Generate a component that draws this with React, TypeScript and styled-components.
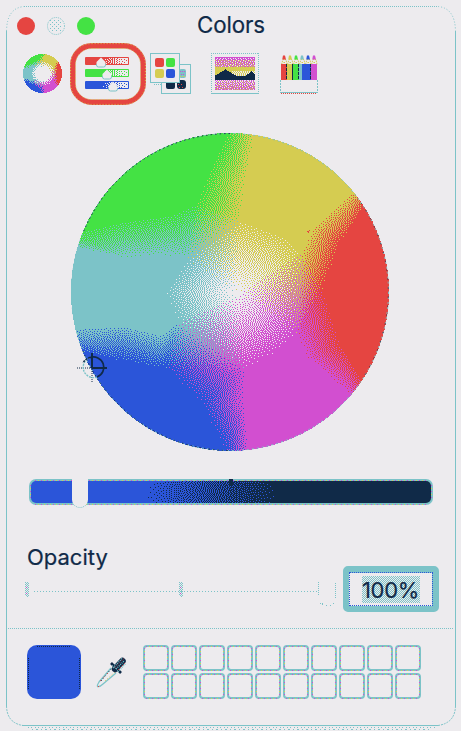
import React, { useMemo } from 'react';
import styled, { createGlobalStyle } from 'styled-components';

const c = {
  paper: '#edebee',
  teal: '#7cc3c8',
  red: '#e54541',
  green: '#44e244',
  yellow: '#d5cc51',
  blue: '#2b55d9',
  magenta: '#d24fd0',
  navy: '#102a48',
};

type Ink = keyof typeof c;
type Blend = Partial<Record<Ink, number>>;
type Sample = (x: number, y: number) => Blend | null;

const inks = Object.keys(c) as Ink[];
const clamp = (v: number, lo = 0, hi = 1) => Math.max(lo, Math.min(hi, v));

/* Serpentine error diffusion of ink shares; each ink becomes one path of pixel runs. */
function diffuse(w: number, h: number, sample: Sample) {
  const n = inks.length;
  const paths = inks.map(() => '');
  const v = new Float32Array(n);
  let cur = new Float32Array((w + 2) * n);
  for (let y = 0; y < h; y++) {
    const next = new Float32Array((w + 2) * n);
    const row = new Int8Array(w).fill(-1);
    const dir = y % 2 ? -1 : 1;
    for (let k = 0, x = dir > 0 ? 0 : w - 1; k < w; k++, x += dir) {
      const blend = sample(x, y);
      if (!blend) continue;
      const o = (x + 1) * n;
      let best = -1;
      for (let i = 0; i < n; i++) {
        const share = blend[inks[i]] || 0;
        v[i] = share + cur[o + i];
        if (share > 0.01 && (best < 0 || v[i] > v[best])) best = i;
      }
      row[x] = best;
      for (let i = 0; i < n; i++) {
        const e = clamp(v[i] - (i === best ? 1 : 0), -1, 1);
        cur[o + dir * n + i] += (e * 7) / 16;
        next[o - dir * n + i] += (e * 3) / 16;
        next[o + i] += (e * 5) / 16;
        next[o + dir * n + i] += e / 16;
      }
    }
    for (let x = 0; x < w; ) {
      let end = x + 1;
      while (end < w && row[end] === row[x]) end++;
      if (row[x] >= 0) paths[row[x]] += `M${x} ${y}h${end - x}v1h${x - end}z`;
      x = end;
    }
    cur = next;
  }
  return paths;
}

type Vertex = [number, number, Ink];
const W: Vertex = [15, 0, 'paper'];
const Y = ([[35, 218], [170, 172], [212, 128]] as const).map(([x, y]): Vertex => [x, y, 'yellow']);
const T = ([[-130, 95], [-195, 0], [-155, -85]] as const).map(([x, y]): Vertex => [x, y, 'teal']);
const M = ([[50, -228], [160, -170], [195, -130]] as const).map(([x, y]): Vertex => [x, y, 'magenta']);
const G: Vertex = [-105, 268, 'green'];
const B: Vertex = [-195, -228, 'blue'];
const R: Vertex = [278, 12, 'red'];

/* A soft border between two hues, as pairs of points running outwards. */
const band = (a: Ink, b: Ink, rows: number[][]) =>
  rows.slice(1).flatMap((q, i) => {
    const p = rows[i];
    const a0: Vertex = [p[0], p[1], a];
    const b0: Vertex = [p[2], p[3], b];
    const a1: Vertex = [q[0], q[1], a];
    const b1: Vertex = [q[2], q[3], b];
    return [[a0, b0, a1], [b0, a1, b1]];
  });

const mesh: Vertex[][] = [
  [W, Y[0], Y[1]], [W, Y[1], Y[2]], [W, Y[2], M[2]], [W, M[2], M[1]], [W, M[1], M[0]],
  [W, M[0], T[2]], [W, T[2], T[1]], [W, T[1], T[0]], [W, T[0], Y[0]],
  [Y[2], M[2], R], [Y[0], T[0], G], [T[2], M[0], B],
  ...band('green', 'yellow', [[-105, 268, 35, 218], [-80, 330, 48, 330], [-10, 485, 80, 485]]),
  ...band('green', 'teal', [[-105, 268, -130, 95], [-180, 236, -180, 105], [-310, 220, -310, 100], [-490, 180, -490, 135]]),
  ...band('teal', 'blue', [[-155, -85, -195, -228], [-200, -122, -235, -226], [-310, -96, -330, -208], [-490, -104, -490, -178]]),
  ...band('blue', 'magenta', [[-195, -228, 50, -228], [-85, -334, 45, -334], [-12, -485, 58, -485]]),
  ...band('magenta', 'red', [[195, -130, 278, 12], [225, -195, 335, -160], [365, -318, 410, -280]]),
  ...band('yellow', 'red', [[212, 128, 278, 12], [240, 190, 335, 150], [375, 315, 415, 268]]),
];

const borders: [number, Ink][] = [
  [38, 'red'], [85, 'yellow'], [161, 'green'], [198, 'teal'], [273, 'blue'], [321, 'magenta'], [361, 'red'],
];

function wheelBlend(x: number, y: number): Blend {
  for (const [p, q, s] of mesh) {
    const d = (q[1] - s[1]) * (p[0] - s[0]) + (s[0] - q[0]) * (p[1] - s[1]);
    const a = ((q[1] - s[1]) * (x - s[0]) + (s[0] - q[0]) * (y - s[1])) / d;
    const b = ((s[1] - p[1]) * (x - s[0]) + (p[0] - s[0]) * (y - s[1])) / d;
    const e = 1 - a - b;
    if (a < 0 || b < 0 || e < 0) continue;
    const out: Blend = {};
    for (const [ink, share] of [[p[2], a], [q[2], b], [s[2], e]] as [Ink, number][]) {
      out[ink] = (out[ink] || 0) + share;
    }
    return out;
  }
  if (x < -100 && y > -125 && y < 110) return { teal: 1 };
  if (x > 0 && Math.hypot(x, y) < 290 && Math.abs(y) > 100) return y > 0 ? { yellow: 1 } : { magenta: 1 };
  const deg = ((Math.atan2(y, x) * 180) / Math.PI + 360) % 360;
  return { [borders.find(([limit]) => deg < limit)![1]]: 1 };
}

const wheelSample = (size: number, core: number): Sample => (x, y) => {
  const radius = size / 2;
  const dx = (x + 0.5 - radius) / radius;
  const dy = (radius - y - 0.5) / radius;
  const r = Math.hypot(dx, dy);
  if (r > 1) return null;
  if (r < core) return { paper: 1 };
  const scale = (476 * (r - core)) / (1 - core) / (r || 1);
  return wheelBlend(dx * scale, dy * scale);
};

const largeWheel = wheelSample(318, 0.015);
const smallWheel = wheelSample(39, 0.36);

const brightness: Sample = (x) => {
  const t = clamp((x - 112) / 135);
  return { blue: 1 - t, navy: t };
};

const scene: Sample = (x, y) => {
  const ridge = Math.min(12 + Math.abs(x - 10) * 0.6, 14 + Math.abs(x - 36) * 0.7, 19);
  if (y >= ridge && y < 23) return { navy: 1 };
  if (y < 2) return { magenta: 0.8, paper: 0.2 };
  if (y < 10) return { magenta: 0.66 - y * 0.02, yellow: 0.14 + y * 0.02, paper: 0.2 };
  if (y < 23) return x > 16 && y > 13 ? { yellow: 0.5, paper: 0.5 } : { yellow: 1 };
  return { magenta: 0.42 + (y - 23) * 0.02, yellow: 0.1 + (y - 23) * 0.02, paper: 0.48 - (y - 23) * 0.04 };
};

const Global = createGlobalStyle`
  html, body { margin: 0; background: ${c.paper}; }
  body { overflow: hidden; }
`;

const Page = styled.div`
  box-sizing: border-box;
  width: 461px;
  height: 731px;
  padding: 6px 5px 0 6px;
  background: ${c.paper};
  color: ${c.navy};
  font-family: Inter, 'Liberation Sans', sans-serif;
  -webkit-text-stroke: 0.2px ${c.navy};
  overflow: hidden;
`;

const Panel = styled.main`
  position: relative;
  box-sizing: border-box;
  display: flex;
  flex-direction: column;
  width: 450px;
  height: 720px;
`;

const Outline = styled.svg`
  position: absolute;
  inset: 0;
  pointer-events: none;
`;

const TitleBar = styled.header`
  display: grid;
  grid-template-columns: 80px 1fr 80px;
  align-items: center;
  height: 40px;
  padding: 0 11px;
`;

const Lights = styled.div`
  display: flex;
  gap: 12px;
`;

const Light = styled.span<{ $fill: string }>`
  width: 18px;
  height: 18px;
  flex: none;
  border-radius: 50%;
  background: ${(p) => p.$fill};
  svg { display: block; }
`;

const Title = styled.h1`
  margin: -2px 0 0;
  text-align: center;
  font-size: 22.3px;
  line-height: 28px;
  font-weight: 400;
  letter-spacing: -0.1px;
`;

const Toolbar = styled.nav`
  display: flex;
  align-items: flex-start;
  height: 58px;
  margin-top: -3px;
  padding-left: 17px;
`;

const Tool = styled.button<{ $w: number; $gap: number; $top: number }>`
  flex: none;
  width: ${(p) => p.$w}px;
  margin: ${(p) => p.$top}px ${(p) => p.$gap}px 0 0;
  padding: 0;
  border: 0;
  background: none;
  svg { display: block; overflow: visible; }
`;

const WheelArea = styled.section`
  position: relative;
  align-self: flex-start;
  margin: 32px 0 0 65px;
  width: 318px;
  height: 318px;
  svg { display: block; }
`;

const Rim = styled.svg`
  position: absolute;
  inset: 0;
`;

const Crosshair = styled.svg`
  position: absolute;
  left: 6px;
  top: 219px;
`;

const BrightnessTrack = styled.div`
  position: relative;
  box-sizing: border-box;
  width: 404px;
  height: 26px;
  margin: 28px 0 0 23px;
  padding: 2px;
  border-radius: 7px;
  background: ${c.teal};
  svg { display: block; border-radius: 5px; }
`;

const TrackEdge = styled.svg`
  position: absolute;
  inset: 0;
`;

const BrightnessKnob = styled.span`
  position: absolute;
  left: 43px;
  top: -1px;
  width: 16px;
  height: 30px;
  border-radius: 0 0 8px 8px;
  background: ${c.paper};
  border-bottom: 1px dotted ${c.teal};
  box-sizing: border-box;
`;

const CenterNotch = styled.span`
  position: absolute;
  left: 200px;
  top: 0;
  width: 4px;
  height: 6px;
  background: ${c.navy};
`;

const Label = styled.label`
  margin: 38px 0 0 21px;
  font-size: 22px;
  line-height: 28px;
  letter-spacing: 0;
`;

const OpacityRow = styled.div`
  display: flex;
  align-items: center;
  height: 46px;
  margin-top: -5px;
  padding-left: 19px;
  svg { display: block; flex: none; }
`;

const ValueField = styled.div`
  box-sizing: border-box;
  display: flex;
  align-items: center;
  justify-content: center;
  width: 96px;
  height: 46px;
  margin-left: 5px;
  border: 6px solid ${c.teal};
  border-top-width: 7px;
  border-right-width: 7px;
  border-radius: 5px;
  outline: 1px dotted ${c.blue};
  outline-offset: -7px;
`;

const Selection = styled.span`
  width: 58px;
  height: 27px;
  text-align: center;
  font-size: 22px;
  line-height: 28px;
  letter-spacing: -0.3px;
  white-space: nowrap;
  background: repeating-conic-gradient(${c.teal} 0 25%, ${c.paper} 0 50%) 0 0 / 2px 2px;
`;

const Divider = styled.div`
  flex: none;
  height: 1px;
  margin: 16px 2px 0;
  background: repeating-linear-gradient(90deg, ${c.teal} 0 1px, ${c.paper} 1px 2px);
`;

const Footer = styled.footer`
  display: flex;
  padding: 16px 0 0 21px;
`;

const Swatch = styled.div`
  box-sizing: border-box;
  width: 54px;
  height: 54px;
  border-radius: 10px;
  background: ${c.blue};
  svg { display: block; }
`;

const Dropper = styled.svg`
  margin: 11px 14px 0 15px;
`;

const Wells = styled.div`
  display: grid;
  grid-template-columns: repeat(10, 26px);
  grid-auto-rows: 26px;
  gap: 2px;
  svg { display: block; }
`;

const inkPaths = (paths: string[]) =>
  paths.map((d, i) => d && <path key={i} d={d} fill={c[inks[i]]} />);

function Pixels({ w, h, sample }: { w: number; h: number; sample: Sample }) {
  const paths = useMemo(() => diffuse(w, h, sample), [w, h, sample]);
  return (
    <svg width={w} height={h} shapeRendering="crispEdges">
      {inkPaths(paths)}
    </svg>
  );
}

function PanelOutline() {
  return (
    <Outline width="450" height="725" fill="none" stroke={c.teal}>
      <path d="M18 .5H432" strokeDasharray="1 1" />
      <path d="M.5 25Q1 2 18 .5M432 .5Q449 2 449.5 25" strokeDasharray="1 2" />
      <path d="M.5 25V700M449.5 25V700" />
      <path d="M.5 700Q1 717 17 719.5M449.5 700Q449 717 432 719.5" strokeDasharray="2 1" />
      <path d="M16 719.5H432" />
      <path d="M22 721.5H430" strokeDasharray="1 2 1 3" />
      <path d="M26 723.5H426" strokeDasharray="1 3 2 3" />
    </Outline>
  );
}

function YellowLight() {
  return (
    <svg width="18" height="18">
      <circle cx="9" cy="9" r="8.5" fill="none" stroke={c.teal} strokeDasharray="1 1" />
      {[3, 5, 7, 9, 11, 13].map((y, j) => (
        <path key={y} d={`M${3 + (j % 2) * 2} ${y}.5H15`} stroke={c.teal} strokeDasharray="1 3" />
      ))}
    </svg>
  );
}

const bars: { y: number; ink: Ink; knob: number }[] = [
  { y: 14, ink: 'red', knob: 31 },
  { y: 26, ink: 'green', knob: 37 },
  { y: 38, ink: 'blue', knob: 43 },
];

const barSample = bars.map(({ ink }): Sample => (x) => {
  const t = clamp((x - 14) / 26, 0, 0.85);
  return { [ink]: 1 - t, paper: t };
});

function SlidersIcon() {
  const rows = useMemo(() => barSample.map((s) => diffuse(42, 6, s)), []);
  return (
    <svg width="76" height="62">
      <rect x="2.8" y="2.8" width="70.4" height="56.4" rx="19" fill="none" stroke={c.red} strokeWidth="5.4" />
      <rect x=".6" y=".6" width="74.8" height="60.8" rx="21" fill="none" stroke={c.yellow} strokeDasharray="1 2" />
      <rect x="5.5" y="5.5" width="65" height="51" rx="16" fill="none" stroke={c.yellow} strokeDasharray="1 2" />
      {bars.map((b, i) => (
        <g key={b.y}>
          <rect x="15" y={b.y} width="44" height="8" rx="1" fill={c[b.ink]} />
          <g transform={`translate(16 ${b.y + 1})`} shapeRendering="crispEdges">{inkPaths(rows[i])}</g>
          <path d={`M${b.knob} ${b.y + 0.5}l4.5 4.5v3q0 2-2 2h-5q-2 0-2-2v-3z`} fill={c.paper} />
          <path d={`M${b.knob - 4.5} ${b.y + 7}v1q0 2 2 2h5q2 0 2-2v-1`} fill="none" stroke={c.teal} />
        </g>
      ))}
    </svg>
  );
}

function PalettesIcon() {
  return (
    <svg width="41" height="41">
      <rect x="11.5" y="11.5" width="29" height="29" fill={c.paper} stroke={c.teal} />
      <rect x="29" y="16" width="7" height="9" rx="2" fill={c.teal} />
      <path d="M30 18.5h6M29 21.5h6" stroke={c.magenta} strokeDasharray="1 1" />
      <path d="M30 23.5h5" stroke={c.yellow} strokeDasharray="1 1" />
      <rect x="16" y="26" width="9" height="10" rx="2" fill={c.navy} />
      <rect x="27" y="27" width="9" height="9" rx="3" fill={c.navy} />
      <path d="M28 31.5h6M29 34.5h5" stroke={c.red} strokeDasharray="1 2" />
      <rect x=".5" y=".5" width="29" height="29" fill={c.paper} stroke={c.teal} />
      <rect x="5" y="5" width="9" height="9" rx="2" fill={c.red} />
      <rect x="16" y="5" width="9" height="9" rx="2" fill={c.green} />
      <rect x="5" y="16" width="9" height="9" rx="2" fill={c.yellow} />
      <rect x="16" y="16" width="9" height="9" rx="2" fill={c.blue} />
      <path d="M4 31.5h7" stroke={c.teal} strokeDasharray="1 1" />
    </svg>
  );
}

function PictureIcon() {
  const paths = useMemo(() => diffuse(40, 33, scene), []);
  return (
    <svg width="48" height="41" shapeRendering="crispEdges">
      <path d="M0 .5H48M.5 0V41M47.5 0V41" stroke={c.teal} strokeDasharray="1 1" />
      <path d="M0 40.5H48" stroke={c.teal} />
      <g transform="translate(4 4)">{inkPaths(paths)}</g>
    </svg>
  );
}

function PencilsIcon() {
  const leads = [c.red, c.yellow, c.green, c.teal, c.blue, c.magenta];
  return (
    <svg width="38" height="40">
      {leads.map((color, i) => (
        <g key={color} transform={`translate(${i * 6 + 1} 0)`}>
          <path d="M0.5 9.5L2 4.5H5L6 9.5M2.5 7.5H4.5" fill={c.paper} stroke={c.yellow} strokeDasharray="1.5 .8" />
          <path d="M1.2 4.5L2 .5H4L5 4.5z" fill={color} />
          <rect x="0" y="9" width="6" height="16" fill={color} />
          {i === 3 && <rect x="3" y="9" width="3" height="16" fill={c.blue} />}
          {i < 5 && <path d="M5.5 9v16" stroke={i === 3 ? c.blue : c.navy} strokeDasharray={i % 2 ? '2 0' : '3 1'} />}
        </g>
      ))}
      <path d="M.5 25V38M37.5 25V38" stroke={c.teal} strokeDasharray="2 1" />
      <path d="M1 37.5H37" stroke={c.teal} />
      <path d="M1 38.5H37" stroke={c.red} strokeDasharray="1 1" />
    </svg>
  );
}

function Well() {
  return (
    <svg width="26" height="26" fill="none">
      <rect x="1" y="1" width="24" height="24" rx="3" stroke={c.teal} strokeWidth="2" />
      <path d="M3 1.5H23M24.5 3V23M1.5 3V23M3 25.5H23" stroke={c.magenta} strokeDasharray="1 5" />
      <path d="M6 1.5H23M24.5 6V23M1.5 6V23M6 25.5H23" stroke={c.yellow} strokeDasharray="1 5" />
    </svg>
  );
}

export default function App() {
  return (
    <>
      <Global />
      <Page>
        <Panel>
          <PanelOutline />
          <TitleBar>
            <Lights>
              <Light $fill={c.red} />
              <Light $fill="transparent"><YellowLight /></Light>
              <Light $fill={c.green} />
            </Lights>
            <Title>Colors</Title>
          </TitleBar>
          <Toolbar>
            <Tool $w={39} $gap={8} $top={11} aria-label="Wheel"><Pixels w={39} h={39} sample={smallWheel} /></Tool>
            <Tool $w={76} $gap={4} $top={0} aria-label="Sliders"><SlidersIcon /></Tool>
            <Tool $w={41} $gap={20} $top={10} aria-label="Palettes"><PalettesIcon /></Tool>
            <Tool $w={48} $gap={21} $top={10} aria-label="Image"><PictureIcon /></Tool>
            <Tool $w={38} $gap={0} $top={12} aria-label="Pencils"><PencilsIcon /></Tool>
          </Toolbar>
          <WheelArea>
            <Pixels w={318} h={318} sample={largeWheel} />
            <Rim width="318" height="318" fill="none">
              <circle cx="159" cy="159" r="158.5" stroke={c.teal} strokeDasharray="2 3" />
              <path d="M159 .5A158.5 158.5 0 0 0 12 100M12 218A158.5 158.5 0 0 0 159 317.5" stroke={c.navy} strokeDasharray="1.5 3" />
              <path d="M290 70A158.5 158.5 0 0 1 290 248" stroke={c.navy} strokeDasharray="1 8" />
            </Rim>
            <Crosshair width="32" height="32" fill="none">
              <path d="M0 16H14M15 17V31" stroke={c.navy} strokeDasharray="1 1" />
              <path d="M15 16H30M15 1V16" stroke={c.navy} strokeWidth="2" />
              <path d="M13 5.6A10.3 10.3 0 0 1 20 25" stroke={c.navy} strokeWidth="1.7" />
              <path d="M13 5.6A10.3 10.3 0 1 0 20 25" stroke={c.teal} strokeWidth="1.4" strokeDasharray="2 1" />
              <path d="M13 5.6A10.3 10.3 0 0 0 6 11" stroke={c.navy} strokeWidth="1.5" strokeDasharray="2 1" />
            </Crosshair>
          </WheelArea>
          <BrightnessTrack>
            <Pixels w={400} h={22} sample={brightness} />
            <TrackEdge width="404" height="26" fill="none">
              <path d="M6 1.5H398M6 25.5H398M1.5 6V20M402.5 6V20" stroke={c.magenta} strokeDasharray="1 5" />
              <path d="M9 1.5H398M9 25.5H398M1.5 9V20M402.5 9V20" stroke={c.yellow} strokeDasharray="1 5" />
            </TrackEdge>
            <CenterNotch />
            <BrightnessKnob />
          </BrightnessTrack>
          <Label>Opacity</Label>
          <OpacityRow>
            <svg width="313" height="36" fill="none" stroke={c.teal} shapeRendering="crispEdges">
              <path d="M9 20.5H292" strokeDasharray="1 2" />
              {[0, 154].map((x) => (
                <g key={x}>
                  <path d={`M${x + 0.5} 11v14M${x + 2.5} 11v15`} strokeDasharray="1 1" />
                  <path d={`M${x + 1.5} 12v14M${x + 3.5} 12v13`} strokeDasharray="1 1" />
                  <path d={`M${x + 1.5} 16v8`} stroke={c.magenta} strokeDasharray="1 5" />
                </g>
              ))}
              <path d="M293.5 11v13M310.5 12v15" strokeDasharray="1 1" />
              <path d="M295 32.5h3M297 33.5h2M301 34.5h1M305 34.5h1M308 32.5h1" strokeDasharray="1 1" />
            </svg>
            <ValueField><Selection>100%</Selection></ValueField>
          </OpacityRow>
          <Divider />
          <Footer>
            <Swatch>
              <svg width="54" height="54" stroke={c.navy}>
                <path d="M10 1.5H44M1.5 13V44M52.5 13V44" strokeDasharray="1 1" />
              </svg>
            </Swatch>
            <Dropper width="33" height="33" fill="none">
              <path d="M15 12L3 26Q1 29 1.5 30.5Q4 31 7 28L20 17" stroke={c.teal} strokeWidth="1.3" />
              <path d="M5 25L15 13" stroke={c.navy} strokeDasharray="1 2" />
              <path d="M4 25L12 17M2 30.5h1" stroke={c.red} strokeDasharray="1 4" />
              <path d="M9 25L19 16" stroke={c.yellow} strokeDasharray="1 2" />
              <path d="M15 7L25 17" stroke={c.navy} strokeWidth="2.6" />
              <path d="M19 13L26.5 5" stroke={c.navy} strokeWidth="6.5" strokeLinecap="round" />
              <path d="M17 12L26 2.5M22 16L30 7M20 13L28 5" stroke={c.teal} strokeWidth="1.4" strokeDasharray="1 1" />
              <path d="M19 11.5L28 2.5M22 14L30 6" stroke={c.red} strokeDasharray="1 2" />
              <path d="M16 9l7 7" stroke={c.teal} strokeDasharray="1 1.5" />
            </Dropper>
            <Wells>
              {Array.from({ length: 20 }, (_, i) => <Well key={i} />)}
            </Wells>
          </Footer>
        </Panel>
      </Page>
    </>
  );
}
